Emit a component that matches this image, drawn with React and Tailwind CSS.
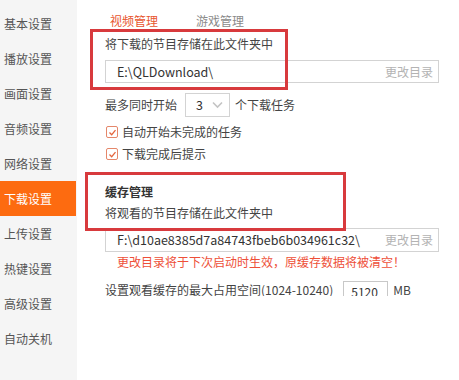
import React from "react";

const items = ["基本设置", "播放设置", "画面设置", "音频设置", "网络设置", "下载设置", "上传设置", "热键设置", "高级设置", "自动关机"];

function Check({ label }) {
  return (
    <div className="h-[22px] flex items-center">
      <div className="ml-[1px] w-[12px] h-[12px] border border-[#e5876a] rounded-[2px] flex items-center justify-center bg-white">
        <svg width="9" height="9" viewBox="0 0 9 9">
          <polyline points="1.5,4.5 3.7,6.7 7.5,2.2" fill="none" stroke="#e5653c" strokeWidth="1.3" />
        </svg>
      </div>
      <span className="ml-[4px] text-[#444]">{label}</span>
    </div>
  );
}

function PathInput({ value, h }) {
  return (
    <div className={`w-[334px] ${h} border border-[#d3d3d3] flex items-center justify-between bg-white`}>
      <span className="pl-[11px] text-[#333] text-[12.5px]">{value}</span>
      <span className="pr-[5px] text-[#b3b3b3]">更改目录</span>
    </div>
  );
}

export default function App() {
  return (
    <div
      className="relative w-[459px] h-[380px] flex bg-white text-[12px] leading-[16px] overflow-hidden"
      style={{ fontFamily: '"Microsoft YaHei", "Noto Sans CJK SC", sans-serif' }}
    >
      <div className="w-[77px] h-full bg-[#f5f5f5] pt-[6px] flex flex-col">
        {items.map((t) => (
          <div
            key={t}
            className={`h-[35px] flex items-center pl-[4px] text-[12px] ${
              t === "下载设置" ? "bg-[#fd6b10] text-white w-[76px]" : "text-[#555]"
            }`}
          >
            {t}
          </div>
        ))}
      </div>

      <div className="flex-1 h-[296px] overflow-hidden pl-[28px] pt-[13px] flex flex-col">
        <div className="h-[16px] flex items-center">
          <span className="ml-[5px] text-[#e8552e]">视频管理</span>
          <span className="ml-[38px] text-[#8a8a8a]">游戏管理</span>
        </div>
        <div className="mt-[7px] h-[16px] text-[#444]">将下载的节目存储在此文件夹中</div>
        <div className="mt-[8px]">
          <PathInput value="E:\QLDownload\" h="h-[23px]" />
        </div>
        <div className="mt-[10px] h-[24px] flex items-center text-[#444]">
          <span>最多同时开始</span>
          <div className="ml-[8px] w-[45px] h-[24px] border border-[#d3d3d3] flex items-center justify-between bg-white">
            <span className="pl-[10px] text-[#333] text-[12.5px]">3</span>
            <svg width="11" height="8" viewBox="0 0 11 8" className="mr-[6px]">
              <polyline points="1,1.5 5.5,6 10,1.5" fill="none" stroke="#c4c4c4" strokeWidth="1.6" />
            </svg>
          </div>
          <span className="ml-[5px]">个下载任务</span>
        </div>
        <div className="mt-[4px]">
          <Check label="自动开始未完成的任务" />
          <Check label="下载完成后提示" />
        </div>
        <div className="mt-[19px] h-[16px] font-bold text-[#333]">缓存管理</div>
        <div className="mt-[5px] h-[16px] text-[#444]">将观看的节目存储在此文件夹中</div>
        <div className="mt-[7px]">
          <PathInput value="F:\d10ae8385d7a84743fbeb6b034961c32\" h="h-[24px]" />
        </div>
        <div className="mt-[2px] h-[16px] pl-[12px] text-[#ee4f38]">
          更改目录将于下次启动时生效，原缓存数据将被清空！
        </div>
        <div className="mt-[11px] flex items-start text-[#444]">
          <span className="mt-[1px]">设置观看缓存的最大占用空间(1024-10240)</span>
          <div className="ml-[10px] w-[45px] h-[22px] border border-[#c8c8c8] flex items-center pl-[7px] text-[#333]">
            5120
          </div>
          <span className="ml-[5px] mt-[1px]">MB</span>
        </div>
      </div>

      <div className="absolute left-[90px] top-[29px] w-[198px] h-[61px] border-[3px] border-[#d83a3d] pointer-events-none" />
      <div className="absolute left-[85px] top-[172px] w-[261px] h-[59px] border-[3px] border-[#d83a3d] pointer-events-none" />
    </div>
  );
}
